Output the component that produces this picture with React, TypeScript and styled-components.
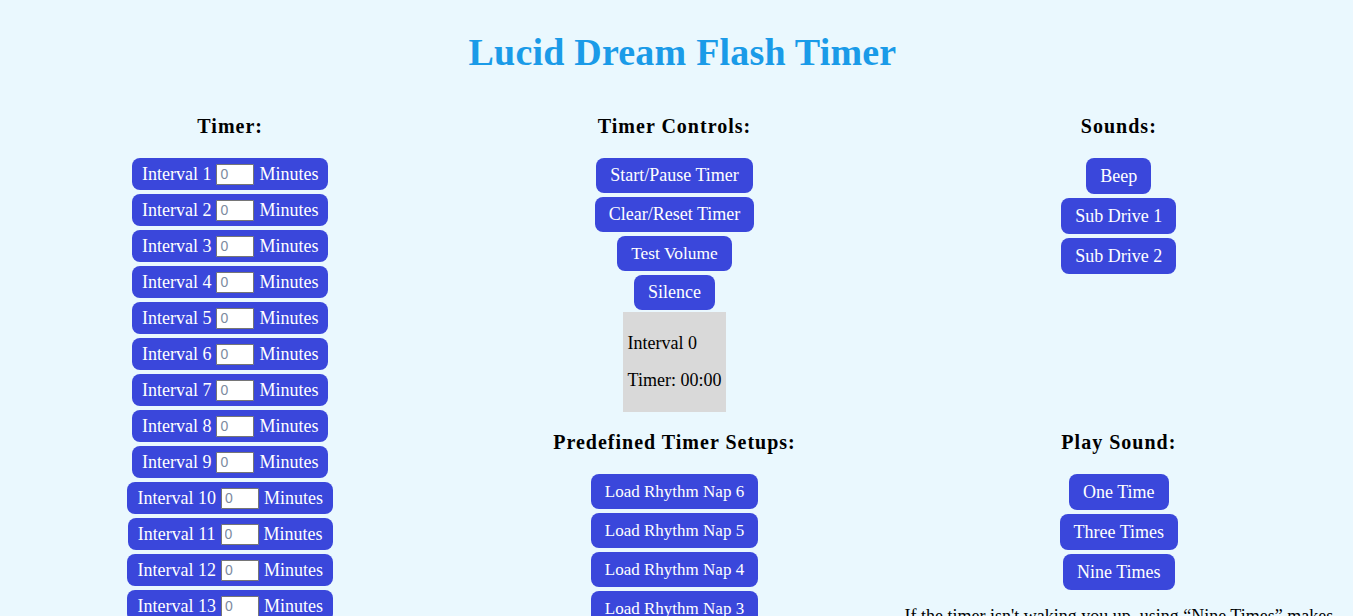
import React from "react";
import styled, { createGlobalStyle } from "styled-components";

const GlobalStyle = createGlobalStyle`
  html, body {
    margin: 0;
    padding: 0;
    background: #eaf8fe;
  }
  body {
    font-family: "Liberation Serif", "Times New Roman", serif;
    color: #000;
  }
  ::-webkit-scrollbar { width: 4px; background: #f0f0f0; }
  ::-webkit-scrollbar-button { height: 14px; background: #f0f0f0; }
  ::-webkit-scrollbar-thumb { background: #c6c6c6; }
`;

const Page = styled.div`
  padding: 0 12px 8px 8px;
`;

const Title = styled.h1`
  margin: 32px 0 24px;
  padding-left: 16px;
  height: 40px;
  line-height: 40px;
  text-align: center;
  font-family: "Liberation Serif", serif;
  font-weight: 700;
  font-size: 38px;
  letter-spacing: 0.2px;
  color: #1a9be8;
`;

const Layout = styled.div`
  display: grid;
  grid-template-columns: 1fr 2fr;
  align-items: start;
`;

const Right = styled.div`
  display: grid;
  grid-template-columns: 1fr 1fr;
  grid-template-rows: auto auto;
  align-content: start;
`;

const Column = styled.section`
  display: flex;
  flex-direction: column;
  align-items: center;
  min-width: 0;
`;

const Heading = styled.h2`
  margin: 18px 0 20px;
  height: 24px;
  line-height: 24px;
  font-size: 20px;
  font-weight: 700;
  letter-spacing: 1px;
  text-align: center;
`;

const Stack = styled.div<{ $gap: number }>`
  display: flex;
  flex-direction: column;
  align-items: center;
  gap: ${(p) => p.$gap}px;
`;

const IntervalRow = styled.label`
  display: flex;
  align-items: center;
  gap: 5px;
  height: 32px;
  padding: 0 10px;
  box-sizing: border-box;
  background: #3a47db;
  color: #fff;
  border-radius: 8px;
  font-size: 18px;
  white-space: nowrap;
`;

const MinutesInput = styled.input`
  width: 38px;
  height: 21px;
  box-sizing: border-box;
  margin: 0;
  padding: 0 3px;
  border: 1px solid #767676;
  border-radius: 1px;
  background: #fff;
  font-family: "Liberation Sans", Arial, sans-serif;
  font-size: 14px;
  color: #000;
  &::placeholder { color: #7d8aa0; }
`;

const Button = styled.button<{ $h: number; $fs?: number }>`
  height: ${(p) => p.$h}px;
  padding: 0 14px;
  border: none;
  border-radius: 8px;
  background: #3a47db;
  color: #fff;
  font-family: "Liberation Serif", "Times New Roman", serif;
  font-size: ${(p) => p.$fs ?? 18}px;
  white-space: nowrap;
  cursor: pointer;
`;

const Display = styled.div`
  margin-top: 2px;
  padding: 5px;
  background: #d9d9d9;
  font-size: 18px;
  p { margin: 16px 0; line-height: 21px; }
`;

const Note = styled.p`
  margin: 16px 0 0;
  font-size: 18px;
  line-height: 21px;
  text-align: center;
`;

const intervals = Array.from({ length: 20 }, (_, i) => i + 1);
const naps = [6, 5, 4, 3, 2, 1];

export default function App() {
  return (
    <>
      <GlobalStyle />
      <Page>
        <Title>Lucid Dream Flash Timer</Title>
        <Layout>
          <Column>
            <Heading>Timer:</Heading>
            <Stack $gap={4}>
              {intervals.map((n) => (
                <IntervalRow key={n}>
                  Interval {n}
                  <MinutesInput type="text" placeholder="0" />
                  Minutes
                </IntervalRow>
              ))}
            </Stack>
          </Column>
          <Right>
            <Column>
              <Heading>Timer Controls:</Heading>
              <Stack $gap={4}>
                <Button $h={35}>Start/Pause Timer</Button>
                <Button $h={35}>Clear/Reset Timer</Button>
                <Button $h={35} $fs={17.4}>Test Volume</Button>
                <Button $h={35}>Silence</Button>
              </Stack>
              <Display>
                <p>Interval 0</p>
                <p>Timer: 00:00</p>
              </Display>
            </Column>
            <Column>
              <Heading>Sounds:</Heading>
              <Stack $gap={4}>
                <Button $h={36}>Beep</Button>
                <Button $h={36}>Sub Drive 1</Button>
                <Button $h={36}>Sub Drive 2</Button>
              </Stack>
            </Column>
            <Column>
              <Heading>Predefined Timer Setups:</Heading>
              <Stack $gap={4}>
                {naps.map((n) => (
                  <Button key={n} $h={35} $fs={17}>
                    Load Rhythm Nap {n}
                  </Button>
                ))}
              </Stack>
            </Column>
            <Column>
              <Heading>Play Sound:</Heading>
              <Stack $gap={4}>
                <Button $h={36}>One Time</Button>
                <Button $h={36}>Three Times</Button>
                <Button $h={36}>Nine Times</Button>
              </Stack>
              <Note>
                If the timer isn't waking you up, using “Nine Times” makes
                the sound repeat nine times in a row so it is harder to sleep
                through.
              </Note>
            </Column>
          </Right>
        </Layout>
      </Page>
    </>
  );
}
